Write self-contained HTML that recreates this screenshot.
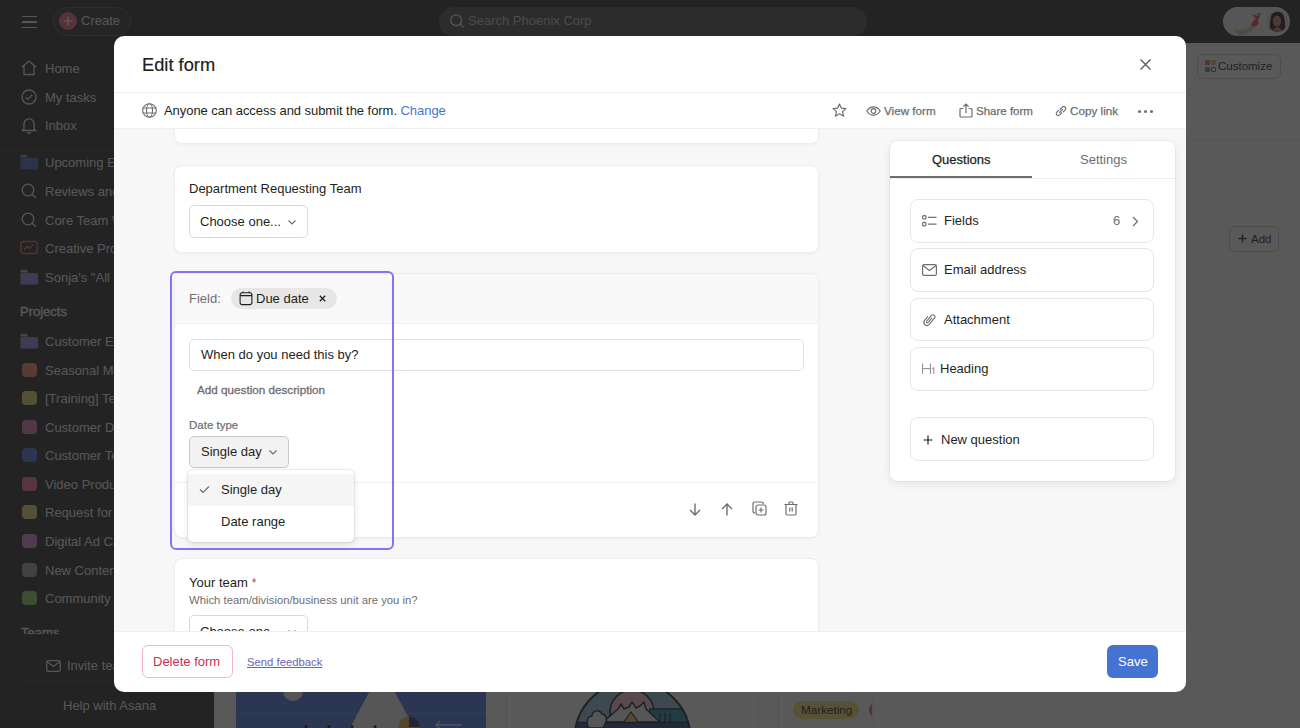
<!DOCTYPE html>
<html><head><meta charset="utf-8">
<style>
*{box-sizing:border-box;margin:0;padding:0}
html,body{width:1300px;height:728px;overflow:hidden;background:#fff;font-family:"Liberation Sans",sans-serif;color:#1e1f21}
.a{position:absolute}
.t{position:absolute;white-space:nowrap;line-height:16px;font-size:13px}
svg{position:absolute;overflow:visible}
#app{position:absolute;left:0;top:0;width:1300px;height:728px;background:#ffffff}
#top{position:absolute;left:0;top:0;width:1300px;height:43px;background:#2e2e30}
#side{position:absolute;left:0;top:43px;width:214px;height:685px;background:#2e2e30}
.si{position:absolute;left:45px;font-size:13px;color:#f5f4f3;white-space:nowrap;line-height:16px}
.pi{position:absolute;left:22px;width:15px;height:14px;border-radius:4px}
#overlay{position:absolute;left:0;top:0;width:1300px;height:728px;background:rgba(31,31,33,0.742)}
#modal{position:absolute;left:114px;top:36px;width:1072px;height:656px;background:#fff;border-radius:10px;overflow:hidden}
#mbody{position:absolute;left:0;top:92px;width:1072px;height:503px;background:#f7f7f7;overflow:hidden}
.card{position:absolute;left:60px;width:645px;background:#fff;border:1px solid #ededed;border-radius:8px;box-shadow:0 1px 3px rgba(0,0,0,0.04)}
.dd{position:absolute;background:#fff;border:1px solid #d9d9d9;border-radius:5px}
.gray{color:#6d6e6f}
.rp{position:absolute;left:776px;top:13px;width:285px;height:340px;background:#fff;border-radius:8px;box-shadow:0 0 0 1px rgba(0,0,0,0.03),0 3px 10px rgba(0,0,0,0.08)}
.ri{position:absolute;left:20px;width:244px;border:1px solid #e6e6e6;border-radius:8px;background:#fff}
.ic{fill:none;stroke:#6d6e6f;stroke-width:1.2}
.sic{fill:none;stroke:#f5f4f3;stroke-width:1.3}
</style></head>
<body>
<div id="app">
  <div id="top">
    <div class="a" style="left:22px;top:15.5px;width:15px;height:1.5px;background:#f5f4f3"></div>
    <div class="a" style="left:22px;top:21px;width:15px;height:1.5px;background:#f5f4f3"></div>
    <div class="a" style="left:22px;top:26.5px;width:15px;height:1.5px;background:#f5f4f3"></div>
    <div class="a" style="left:53px;top:7px;width:78px;height:29px;border-radius:15px;background:#38383a;border:1px solid #5a5a5c"></div>
    <div class="a" style="left:59px;top:12px;width:18px;height:18px;border-radius:50%;background:#f06a6a"></div>
    <svg style="left:62px;top:15px" width="12" height="12" viewBox="0 0 12 12"><path d="M6 1.5V10.5M1.5 6H10.5" stroke="#f5f4f3" stroke-width="1.6"/></svg>
    <div class="t" style="left:81px;top:13px;color:#f5f4f3">Create</div>
    <div class="a" style="left:439px;top:7px;width:428px;height:29px;border-radius:15px;background:#525254"></div>
    <svg style="left:450px;top:14px" width="15" height="15" viewBox="0 0 15 15"><circle cx="6.2" cy="6.2" r="5.4" class="sic"/><path d="M10 10L13.6 13.6" class="sic"/></svg>
    <div class="t" style="left:468px;top:13px;color:#c5c4c4">Search Phoenix Corp</div>
    <div class="a" style="left:1223px;top:7px;width:67px;height:29px;border-radius:15px;background:#f2f2f2"></div>
    <svg style="left:1230px;top:8px" width="62" height="28" viewBox="0 0 62 28">
      <path d="M5 22 Q14 24 22 17" stroke="#e8c060" stroke-width="1.3" fill="none" opacity="0.8"/>
      <path d="M6 24 Q15 26 23 18.5" stroke="#6ab8e0" stroke-width="1.3" fill="none" opacity="0.8"/>
      <path d="M8 26 Q17 27.5 24 20" stroke="#e8a040" stroke-width="1.3" fill="none" opacity="0.8"/>
      <path d="M21 17 Q23 12 26 11 Q24 9 22 6 Q25 7 28 8 L31 4 Q30 8 29 10 Q27 13 29 15 Q27 18 24 19Z" fill="#e8485a"/>
      <circle cx="28.5" cy="6" r="1" fill="#4a6ae0"/>
      <circle cx="47.5" cy="13.7" r="10.5" fill="#e4e4e4" stroke="#cfcfcf" stroke-width="0.8"/>
      <clipPath id="av"><circle cx="47.5" cy="13.7" r="10"/></clipPath>
      <g clip-path="url(#av)">
        <path d="M40 26 Q39 8 43 5 Q48 1.5 52 5 Q56 9 55 26Z" fill="#2a1c16"/>
        <ellipse cx="47" cy="13" rx="4.2" ry="5.5" fill="#c08a6c"/>
        <path d="M42 26 Q44 19 47 19 Q51 19 53 26Z" fill="#b07a5c"/>
        <path d="M39 26 Q40 21 43 21 L44 26Z" fill="#7040d0"/>
      </g>
    </svg>
  </div>
  <div id="side">
    <div class="a" style="left:0;top:107px;width:214px;height:1px;background:#424244"></div>
    <!-- icons -->
    <svg style="left:21px;top:17px" width="16" height="16" viewBox="0 0 16 16"><path d="M1 7 L8 1 L15 7 M3 5.5 V14.5 H13 V5.5" class="sic"/></svg>
    <svg style="left:21px;top:46px" width="16" height="16" viewBox="0 0 16 16"><circle cx="8" cy="8" r="7" class="sic"/><path d="M4.8 8.2 L7 10.4 L11.2 5.8" class="sic"/></svg>
    <svg style="left:21px;top:74px" width="16" height="17" viewBox="0 0 16 17"><path d="M3 12 V7 C3 4 5.2 1.8 8 1.8 C10.8 1.8 13 4 13 7 V12 L14.5 13.5 H1.5 Z M6 15.8 H10" class="sic"/></svg>
    <svg style="left:20px;top:111px" width="19" height="16" viewBox="0 0 19 16"><path d="M0.5 2 Q0.5 0.8 1.7 0.8 H6.5 L8.5 3.5 H0.5Z" fill="#7b8fcf"/><path d="M0.5 4 H17 Q18.2 4 18.2 5.2 V14.2 Q18.2 15.4 17 15.4 H1.7 Q0.5 15.4 0.5 14.2Z" fill="#4f6ec9"/></svg>
    <svg style="left:21px;top:140px" width="16" height="16" viewBox="0 0 16 16"><circle cx="7" cy="7" r="5.8" class="sic"/><path d="M11.2 11.2 L14.8 14.8" class="sic"/></svg>
    <svg style="left:21px;top:169px" width="16" height="16" viewBox="0 0 16 16"><circle cx="7" cy="7" r="5.8" class="sic"/><path d="M11.2 11.2 L14.8 14.8" class="sic"/></svg>
    <svg style="left:20px;top:197px" width="18" height="16" viewBox="0 0 18 16"><rect x="0.8" y="1.5" width="16.4" height="12" rx="2.5" fill="none" stroke="#f06a6a" stroke-width="1.3"/><path d="M4 10 L7 6.5 L9.5 8.5 L13.5 4.5" fill="none" stroke="#f06a6a" stroke-width="1.3"/></svg>
    <svg style="left:20px;top:226px" width="19" height="16" viewBox="0 0 19 16"><path d="M0.5 2 Q0.5 0.8 1.7 0.8 H6.5 L8.5 3.5 H0.5Z" fill="#b5abe8"/><path d="M0.5 4 H17 Q18.2 4 18.2 5.2 V14.2 Q18.2 15.4 17 15.4 H1.7 Q0.5 15.4 0.5 14.2Z" fill="#9b8de0"/></svg>
    <svg style="left:20px;top:290px" width="19" height="16" viewBox="0 0 19 16"><path d="M0.5 2 Q0.5 0.8 1.7 0.8 H6.5 L8.5 3.5 H0.5Z" fill="#b5abe8"/><path d="M0.5 4 H17 Q18.2 4 18.2 5.2 V14.2 Q18.2 15.4 17 15.4 H1.7 Q0.5 15.4 0.5 14.2Z" fill="#9b8de0"/></svg>
    <div class="pi" style="top:320px;background:#f5916e"></div>
    <div class="pi" style="top:348px;background:#eadb6a"></div>
    <div class="pi" style="top:377px;background:#e87bb0"></div>
    <div class="pi" style="top:405px;background:#5578d8"></div>
    <div class="pi" style="top:434px;background:#f26fa0"></div>
    <div class="pi" style="top:462px;background:#eadb6a"></div>
    <div class="pi" style="top:491px;background:#d88fd8"></div>
    <div class="pi" style="top:520px;background:#a8a8a8"></div>
    <div class="pi" style="top:548px;background:#8ccf6a"></div>

    <div class="si" style="top:18px">Home</div>
    <div class="si" style="top:47px">My tasks</div>
    <div class="si" style="top:75px">Inbox</div>
    <div class="si" style="top:112px">Upcoming Events</div>
    <div class="si" style="top:141px">Reviews and approvals</div>
    <div class="si" style="top:170px">Core Team Work</div>
    <div class="si" style="top:198px">Creative Production</div>
    <div class="si" style="top:227px">Sonja's "All Tasks"</div>
    <div class="si" style="top:261px;left:20px;font-size:13px;-webkit-text-stroke:0.35px #f5f4f3">Projects</div>
    <div class="si" style="top:291px">Customer Experience</div>
    <div class="si" style="top:320px">Seasonal Marketing</div>
    <div class="si" style="top:348px">[Training] Team</div>
    <div class="si" style="top:377px">Customer Data</div>
    <div class="si" style="top:405px">Customer Team</div>
    <div class="si" style="top:434px">Video Production</div>
    <div class="si" style="top:462px">Request for</div>
    <div class="si" style="top:491px">Digital Ad Campaign</div>
    <div class="si" style="top:520px">New Content</div>
    <div class="si" style="top:548px">Community</div>
    <div class="si" style="top:582px;left:21px;font-size:13px;-webkit-text-stroke:0.35px #f5f4f3">Teams</div>
    <div class="a" style="left:0;top:591px;width:214px;height:94px;background:#2e2e30;border-top:1px solid #3a3a3c"></div>
    <div class="a" style="left:13px;top:606px;width:220px;height:32px;border:1px solid #3e3e40;border-radius:6px"></div>
    <svg style="left:46px;top:617px" width="15" height="12" viewBox="0 0 15 12"><rect x="0.7" y="0.7" width="13.6" height="10.6" rx="1.5" class="sic"/><path d="M1 1.5 L7.5 6.5 L14 1.5" class="sic"/></svg>
    <div class="si" style="top:615px;left:67px">Invite teammates</div>
    <div class="si" style="top:655px;left:63px">Help with Asana</div>
  </div>
  <!-- main content under overlay -->
  <div class="a" style="left:214px;top:140px;width:1086px;height:1px;background:#ececec"></div>
  <div class="a" style="left:1197px;top:54px;width:84px;height:25px;border:1px solid #cfcbcb;border-radius:6px"></div>
  <div class="a" style="left:1205px;top:60px;width:5px;height:5px;background:#f06a6a;border-radius:1px"></div>
  <div class="a" style="left:1211px;top:60px;width:5px;height:5px;background:#f1bd6c;border-radius:1px"></div>
  <div class="a" style="left:1205px;top:67px;width:5px;height:5px;background:#5da283;border-radius:1px"></div>
  <div class="a" style="left:1211px;top:67px;width:5px;height:5px;border:1px solid #4573d2;border-radius:1px"></div>
  <div class="t" style="left:1218px;top:58px;font-size:11.5px;color:#1e1f21">Customize</div>
  <div class="a" style="left:1229px;top:226px;width:50px;height:26px;border:1px solid #cfcbcb;border-radius:6px"></div>
  <svg style="left:1238px;top:234px" width="9" height="9" viewBox="0 0 9 9"><path d="M4.5 0.5V8.5M0.5 4.5H8.5" stroke="#1e1f21" stroke-width="1.3"/></svg>
  <div class="t" style="left:1251px;top:231px;font-size:11.5px;color:#1e1f21">Add</div>
  <svg style="left:0;top:0" width="1300" height="728" viewBox="0 0 1300 728">
    <path d="M506.5 660V728M758.5 660V728M778.5 660V728" stroke="#e6e6e6" stroke-width="1"/>
    <rect x="236" y="660" width="250" height="68" fill="#4d78df"/>
    <circle cx="293" cy="691" r="10" fill="#f4f4f4"/>
    <path d="M236 713.5H486" stroke="#6f92e8" stroke-width="1"/>
    <path d="M382 668 L414 728 L350 728Z" fill="#f4f4f4"/>
    <circle cx="409" cy="727" r="10.5" fill="#e9a94a"/>
    <path d="M409 716.5 A10.5 10.5 0 0 1 419.5 727 L409 727Z" fill="#2a3c7a"/>
    <circle cx="306" cy="726.5" r="1.6" fill="#111"/><circle cx="329" cy="726.5" r="1.6" fill="#111"/><circle cx="352" cy="726.5" r="1.6" fill="#111"/><circle cx="375" cy="726.5" r="1.6" fill="#111"/>
    <path d="M436 725 H462 M440 721 L436 725 L440 729" stroke="#dfe6f7" stroke-width="1.4" fill="none"/>
    <clipPath id="cc"><circle cx="632.5" cy="739" r="58.5"/></clipPath>
    <circle cx="632.5" cy="739" r="58.5" fill="#8fc6d8"/>
    <g clip-path="url(#cc)">
      <circle cx="632" cy="712" r="22" fill="#ffbcd8" stroke="#14273f" stroke-width="1.6"/>
      <rect x="650" y="709" width="40" height="22" fill="#2f90a8" stroke="#14273f" stroke-width="1.4"/>
      <path d="M660 713V728M665 713V728M670 713V728" stroke="#14273f" stroke-width="1.2"/>
      <path d="M603 722 L618 709 L621 704 L624 709 L629 707 L632 702 L636 708 L640 706 L644 702 L646 709 L660 722Z" fill="#f4f4f4" stroke="#14273f" stroke-width="1.5" stroke-linejoin="round"/>
      <path d="M623 723 L631 712 L639 723Z" fill="#e8cf5a" stroke="#14273f" stroke-width="1.2"/>
      <rect x="570" y="723" width="125" height="10" fill="#2b4a82"/>
      <path d="M570 722.5H695" stroke="#14273f" stroke-width="1.5"/>
      <path d="M589 728 C585 722 588 716 592 716 C592 710 600 709 602 714 C606 714 608 720 605 724 L603 728Z" fill="#f4f4f4" stroke="#14273f" stroke-width="1.4"/>
    </g>
    <circle cx="632.5" cy="739" r="58" fill="none" stroke="#14273f" stroke-width="2"/>
    <clipPath id="rc"><rect x="860" y="690" width="12.2" height="40"/></clipPath>
    <circle cx="877" cy="710" r="8" fill="#f06a6a" clip-path="url(#rc)"/>
    <path d="M873 660V728" stroke="#ececec" stroke-width="1"/>
  </svg>
  <div class="a" style="left:793px;top:701px;width:66px;height:18px;border-radius:9px;background:#f8df72"></div>
  <div class="t" style="left:801px;top:702px;font-size:11.7px;color:#1e1f21">Marketing</div>
</div>
<div id="overlay"></div>
<div id="modal">
  <div class="t" style="left:28px;top:17.5px;font-size:18.3px;line-height:22px;-webkit-text-stroke:0.2px #1e1f21">Edit form</div>
  <svg style="left:1026px;top:23px" width="11" height="11" viewBox="0 0 11 11"><path d="M0.5 0.5L10.5 10.5M10.5 0.5L0.5 10.5" stroke="#55565a" stroke-width="1.25" fill="none"/></svg>
  <div class="a" style="left:0;top:56px;width:1072px;height:1px;background:#efefef"></div>
  <svg style="left:28px;top:67px" width="15" height="15" viewBox="0 0 15 15"><g class="ic" style="stroke:#6d6e6f;stroke-width:1.1"><circle cx="7.5" cy="7.5" r="6.8"/><ellipse cx="7.5" cy="7.5" rx="3" ry="6.8"/><path d="M0.7 5H14.3M0.7 10H14.3"/></g></svg>
  <div class="t" style="left:50px;top:67px;letter-spacing:-0.05px">Anyone can access and submit the form. <span style="color:#4573d2">Change</span></div>
  <svg style="left:718px;top:67px" width="15" height="15" viewBox="0 0 15 15"><path d="M7.5 1 L9.4 5.2 L14 5.6 L10.5 8.6 L11.6 13.2 L7.5 10.8 L3.4 13.2 L4.5 8.6 L1 5.6 L5.6 5.2Z" class="ic" style="stroke-linejoin:round"/></svg>
  <svg style="left:752px;top:70px" width="15" height="10" viewBox="0 0 15 10"><path d="M0.8 5 C3 1.5 5 0.8 7.5 0.8 C10 0.8 12 1.5 14.2 5 C12 8.5 10 9.2 7.5 9.2 C5 9.2 3 8.5 0.8 5Z" class="ic"/><circle cx="7.5" cy="5" r="2.3" class="ic"/></svg>
  <div class="t gray" style="left:770px;top:67px;font-size:11.7px;-webkit-text-stroke:0.25px #6d6e6f">View form</div>
  <svg style="left:845px;top:67px" width="14" height="15" viewBox="0 0 14 15"><path d="M4.5 5.5 H2 Q1 5.5 1 6.5 V13 Q1 14 2 14 H12 Q13 14 13 13 V6.5 Q13 5.5 12 5.5 H9.5 M7 10 V1 M4.3 3.6 L7 1 L9.7 3.6" class="ic"/></svg>
  <div class="t gray" style="left:862px;top:67px;font-size:11.5px;-webkit-text-stroke:0.25px #6d6e6f">Share form</div>
  <svg style="left:941px;top:69px" width="12" height="12" viewBox="0 0 12 12"><path d="M5 4.5 L7.2 2.3 Q8.8 0.7 10.3 2.2 Q11.5 3.6 10 5.1 L8 7.1 M7 7.5 L4.8 9.7 Q3.2 11.3 1.7 9.8 Q0.5 8.4 2 6.9 L4 4.9 M4.2 7.8 L7.8 4.2" class="ic"/></svg>
  <div class="t gray" style="left:956px;top:67px;font-size:11.7px;-webkit-text-stroke:0.25px #6d6e6f">Copy link</div>
  <div class="a" style="left:1024px;top:74px;width:3px;height:3px;border-radius:50%;background:#6d6e6f"></div>
  <div class="a" style="left:1030px;top:74px;width:3px;height:3px;border-radius:50%;background:#6d6e6f"></div>
  <div class="a" style="left:1036px;top:74px;width:3px;height:3px;border-radius:50%;background:#6d6e6f"></div>
  <div class="a" style="left:0;top:92px;width:1072px;height:1px;background:#ececec"></div>
  <div id="mbody">
    <!-- card 1 bottom -->
    <div class="card" style="top:-20px;height:36px"></div>
    <!-- card 2 -->
    <div class="card" style="top:37px;height:88px">
      <div class="t" style="left:14px;top:15px">Department Requesting Team</div>
      <div class="dd" style="left:14px;top:39px;width:119px;height:33px">
        <div class="t" style="left:10px;top:8px">Choose one...</div>
        <svg style="left:97px;top:13px" width="10" height="7" viewBox="0 0 10 7"><path d="M1.5 1.5 L5 5 L8.5 1.5" class="ic"/></svg>
      </div>
    </div>
    <!-- card 3 selected -->
    <div class="card" style="top:145px;height:265px;overflow:hidden">
      <div class="a" style="left:0;top:0;width:644px;height:50px;background:#f9f9f9;border-bottom:1px solid #f0f0f0"></div>
      <div class="t gray" style="left:14px;top:17px">Field:</div>
      <div class="a" style="left:56px;top:14px;width:106px;height:21px;border-radius:11px;background:#e8e7e6"></div>
      <svg style="left:64px;top:17px" width="14" height="15" viewBox="0 0 14 15"><rect x="1.1" y="1.8" width="11.8" height="11.8" rx="2.2" fill="none" stroke="#1e1f21" stroke-width="1.1"/><path d="M1.1 4.6 H12.9 M4 0.6 V2 M10 0.6 V2" stroke="#1e1f21" stroke-width="1.1"/></svg>
      <div class="t" style="left:81px;top:17px">Due date</div>
      <svg style="left:144px;top:20.5px" width="7" height="7" viewBox="0 0 7 7"><path d="M0.8 0.8 L6.2 6.2 M6.2 0.8 L0.8 6.2" stroke="#1e1f21" stroke-width="1.25"/></svg>
      <div class="a" style="left:14px;top:65px;width:615px;height:32px;border:1px solid #e0e0e0;border-radius:5px"></div>
      <div class="t" style="left:26px;top:73px">When do you need this by?</div>
      <div class="t gray" style="left:22px;top:108px;font-size:11.7px;-webkit-text-stroke:0.3px #6d6e6f">Add question description</div>
      <div class="t gray" style="left:14px;top:143px;font-size:11.5px;-webkit-text-stroke:0.2px #6d6e6f">Date type</div>
      <div class="a" style="left:14px;top:162px;width:100px;height:32px;border:1px solid #c9c8c8;border-radius:5px;background:#f3f2f2"></div>
      <div class="t" style="left:26px;top:170px">Single day</div>
      <svg style="left:93px;top:175px" width="10" height="7" viewBox="0 0 10 7"><path d="M1.5 1.5 L5 5 L8.5 1.5" class="ic"/></svg>
      <div class="a" style="left:0;top:208px;width:644px;height:1px;background:#f0f0f0"></div>
      <svg style="left:514px;top:229px" width="12" height="13" viewBox="0 0 12 13"><path d="M6 0.5 V12 M1 7 L6 12 L11 7" class="ic" style="stroke-width:1.4"/></svg>
      <svg style="left:546px;top:229px" width="12" height="13" viewBox="0 0 12 13"><path d="M6 12.5 V1 M1 6 L6 1 L11 6" class="ic" style="stroke-width:1.4"/></svg>
      <svg style="left:577px;top:227px" width="15" height="15" viewBox="0 0 15 15"><path d="M3 12 Q1 12 1 10 V3 Q1 1 3 1 H9 Q11 1 11.5 3" class="ic"/><rect x="4" y="4" width="10" height="10" rx="2" class="ic"/><path d="M9 6.5 V11.5 M6.5 9 H11.5" class="ic"/></svg>
      <svg style="left:609px;top:227px" width="14" height="15" viewBox="0 0 14 15"><path d="M0.5 3.5 H13.5 M5 3.5 V2 Q5 1 6 1 H8 Q9 1 9 2 V3.5 M2 3.5 V12.5 Q2 14 3.5 14 H10.5 Q12 14 12 12.5 V3.5 M5.8 6.5 V10.5 M8.2 6.5 V10.5" class="ic"/></svg>
    </div>
    <!-- card 4 -->
    <div class="card" style="top:430px;height:120px">
      <div class="t" style="left:14px;top:16px">Your team<span style="color:#c92f54;margin-left:4px;font-size:12px">*</span></div>
      <div class="t gray" style="left:14px;top:33px;font-size:11.3px">Which team/division/business unit are you in?</div>
      <div class="dd" style="left:14px;top:56px;width:119px;height:33px">
        <div class="t" style="left:10px;top:8px">Choose one...</div>
        <svg style="left:97px;top:13px" width="10" height="7" viewBox="0 0 10 7"><path d="M1.5 1.5 L5 5 L8.5 1.5" class="ic"/></svg>
      </div>
    </div>
    <!-- purple highlight -->
    <div class="a" style="left:56px;top:143px;width:224px;height:279px;border:2px solid #8e6ef6;border-radius:6px"></div>
    <!-- dropdown menu -->
    <div class="a" style="left:74px;top:342px;width:166px;height:72px;background:#fff;border-radius:5px;box-shadow:0 0 0 1px rgba(0,0,0,0.05),0 2px 6px rgba(0,0,0,0.12)">
      <div class="a" style="left:0;top:4px;width:166px;height:32px;background:#f5f5f5"></div>
      <svg style="left:11px;top:15px" width="11" height="9" viewBox="0 0 11 9"><path d="M1 4.5 L4 7.5 L10 1.5" class="ic"/></svg>
      <div class="t" style="left:33px;top:12px">Single day</div>
      <div class="t" style="left:33px;top:44px">Date range</div>
    </div>
    <!-- right panel -->
    <div class="rp">
      <div class="t" style="left:42px;top:11px;-webkit-text-stroke:0.25px #1e1f21">Questions</div>
      <div class="t gray" style="left:190px;top:11px">Settings</div>
      <div class="a" style="left:0;top:37px;width:285px;height:1px;background:#ececec"></div>
      <div class="a" style="left:0;top:35px;width:142px;height:2px;background:#6d6e6f"></div>
      <div class="ri" style="top:58px;height:44px">
        <svg style="left:11px;top:15px" width="15" height="12" viewBox="0 0 15 12"><rect x="0.6" y="0.6" width="3.4" height="3.4" rx="1" class="ic"/><rect x="0.6" y="7.4" width="3.4" height="3.4" rx="1" class="ic"/><path d="M6 2.3 H14.5 M6 9.1 H14.5" class="ic"/></svg>
        <div class="t" style="left:33px;top:13px">Fields</div><div class="t gray" style="left:202px;top:13px">6</div>
        <svg style="left:221px;top:16px" width="7" height="11" viewBox="0 0 7 11"><path d="M1 1 L5.5 5.5 L1 10" class="ic"/></svg>
      </div>
      <div class="ri" style="top:107px;height:44px">
        <svg style="left:11px;top:15px" width="15" height="12" viewBox="0 0 15 12"><rect x="0.6" y="0.6" width="13.8" height="10.8" rx="1.5" class="ic"/><path d="M1 1.5 L7.5 6.5 L14 1.5" class="ic"/></svg>
        <div class="t" style="left:33px;top:13px">Email address</div></div>
      <div class="ri" style="top:157px;height:43px">
        <svg style="left:12px;top:13px" width="13" height="15" viewBox="0 0 13 15"><g transform="translate(6.5,7.3) rotate(40) scale(0.78)"><path d="M1.3 -3.5 V4.2 A1.3 1.3 0 0 1 -1.3 4.2 V-5.2 A2.6 2.6 0 0 1 3.9 -5.2 V5.2 A3.9 3.9 0 0 1 -3.9 5.2 V-1.5" fill="none" stroke="#6d6e6f" stroke-width="1.35"/></g></svg>
        <div class="t" style="left:33px;top:13px">Attachment</div></div>
      <div class="ri" style="top:206px;height:44px">
        <svg style="left:11px;top:15px" width="14" height="12" viewBox="0 0 14 12"><path d="M0.6 0.5V11M8.4 0.5V11M0.6 5.6H8.4M10.2 5.8L11.8 4.6V11" fill="none" stroke="#8a8a8c" stroke-width="1"/></svg>
        <div class="t" style="left:29px;top:13px">Heading</div></div>
      <div class="ri" style="top:276px;height:44px">
        <svg style="left:12px;top:17px" width="10" height="10" viewBox="0 0 10 10"><path d="M5 0.5V9.5M0.5 5H9.5" class="ic" style="stroke:#1e1f21"/></svg>
        <div class="t" style="left:30px;top:14px">New question</div></div>
    </div>
  </div>
  <div class="a" style="left:0;top:595px;width:1072px;height:1px;background:#efefef"></div>
  <div class="a" style="left:0;top:92px;width:1072px;height:1px;background:#f0f0f0"></div>
  <div class="a" style="left:28px;top:609px;width:91px;height:33px;border:1px solid #f6b9c6;border-radius:6px"></div>
  <div class="t" style="left:39px;top:618px;color:#c92f54">Delete form</div>
  <div class="t" style="left:133px;top:618px;font-size:11.3px;color:#6b63b5;text-decoration:underline">Send feedback</div>
  <div class="a" style="left:993px;top:609px;width:51px;height:33px;background:#4573d2;border-radius:6px"></div>
  <div class="t" style="left:1004px;top:618px;color:#fff">Save</div>
</div>
</body></html>
